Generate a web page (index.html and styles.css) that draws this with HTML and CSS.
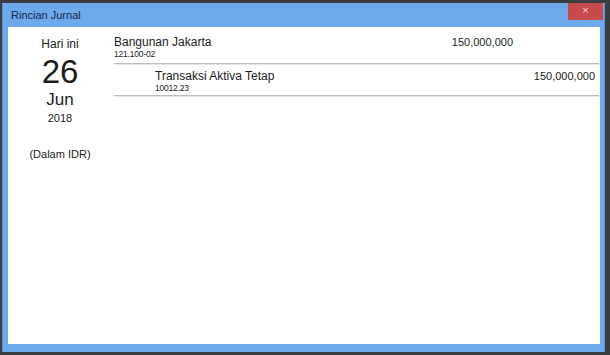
FILE: index.html
```html
<!DOCTYPE html>
<html lang="id">
<head>
  <meta charset="UTF-8">
  <title>Rincian Jurnal</title>
  <link rel="stylesheet" href="styles.css">
</head>
<body>
  <div class="window">
    <div class="titlebar">
      <span class="title">Rincian Jurnal</span>
      <span class="close">×</span>
    </div>
    <div class="content">
      <div class="date-col">
        <p class="today">Hari ini</p>
        <p class="day">26</p>
        <p class="month">Jun</p>
        <p class="year">2018</p>
        <p class="currency">(Dalam IDR)</p>
      </div>
      <div class="entries">
        <div class="row">
          <div class="name">
            <p>Bangunan Jakarta</p>
            <small>121.100-02</small>
          </div>
          <div class="debit">150,000,000</div>
          <div class="credit"></div>
        </div>
        <div class="row sub">
          <div class="name">
            <p>Transaksi Aktiva Tetap</p>
            <small>10012.23</small>
          </div>
          <div class="debit"></div>
          <div class="credit">150,000,000</div>
        </div>
      </div>
    </div>
  </div>
</body>
</html>
```

FILE: styles.css
```css
* {
  margin: 0;
  padding: 0;
  box-sizing: border-box;
}

body {
  background: #3b3e41;
  font-family: 'Liberation Sans', Arial, sans-serif;
  color: #1c1c1c;
  height: 355px;
  overflow: hidden;
  padding: 3px 5px 3px 2px;
}

.window {
  background: #6ea9ec;
  height: 349px;
  display: flex;
  flex-direction: column;
  padding: 0 4px 8px 5px;
  border-left: 1px solid #5f93d0;
  border-right: 1px solid #5f93d0;
}

.titlebar {
  height: 24px;
  display: flex;
  justify-content: space-between;
  align-items: flex-start;
}

.title {
  font-size: 11px;
  color: #16284a;
  padding: 6px 0 0 3px;
}

.close {
  width: 35px;
  height: 17px;
  margin-right: -3px;
  background: #c84b4b;
  color: #f0dede;
  font-size: 11px;
  line-height: 15px;
  text-align: center;
}

.content {
  flex: 1;
  background: #ffffff;
  display: flex;
}

/* date column */
.date-col {
  width: 104px;
  padding-top: 10px;
  text-align: center;
}

.today {
  font-size: 12px;
  line-height: 15px;
}

.day {
  font-size: 33px;
  line-height: 34px;
  margin-top: 3px;
}

.month {
  font-size: 17px;
  line-height: 21px;
}

.year {
  font-size: 11px;
  line-height: 14px;
  margin-top: 1px;
}

.currency {
  font-size: 11px;
  line-height: 14px;
  margin-top: 22px;
}

/* entries */
.entries {
  flex: 1;
  margin-left: 2px;
  margin-right: 1px;
  padding-top: 6px;
}

.row {
  display: grid;
  grid-template-columns: 1fr 90px 83px;
  border-bottom: 1px solid #bdbdbd;
  box-shadow: 0 1px 0 #e6e6e6;
  height: 31px;
  padding-top: 2px;
}

.row.sub {
  height: 32px;
  padding-top: 5px;
}

.row.sub .name {
  padding-left: 41px;
}

.name p {
  font-size: 12px;
  line-height: 14px;
}

.name small {
  display: block;
  font-size: 8.5px;
  line-height: 10px;
  letter-spacing: -0.2px;
}

.debit,
.credit {
  font-size: 11px;
  line-height: 14px;
  text-align: right;
}

.debit {
  padding-right: 3px;
}

.credit {
  padding-right: 4px;
}
```
